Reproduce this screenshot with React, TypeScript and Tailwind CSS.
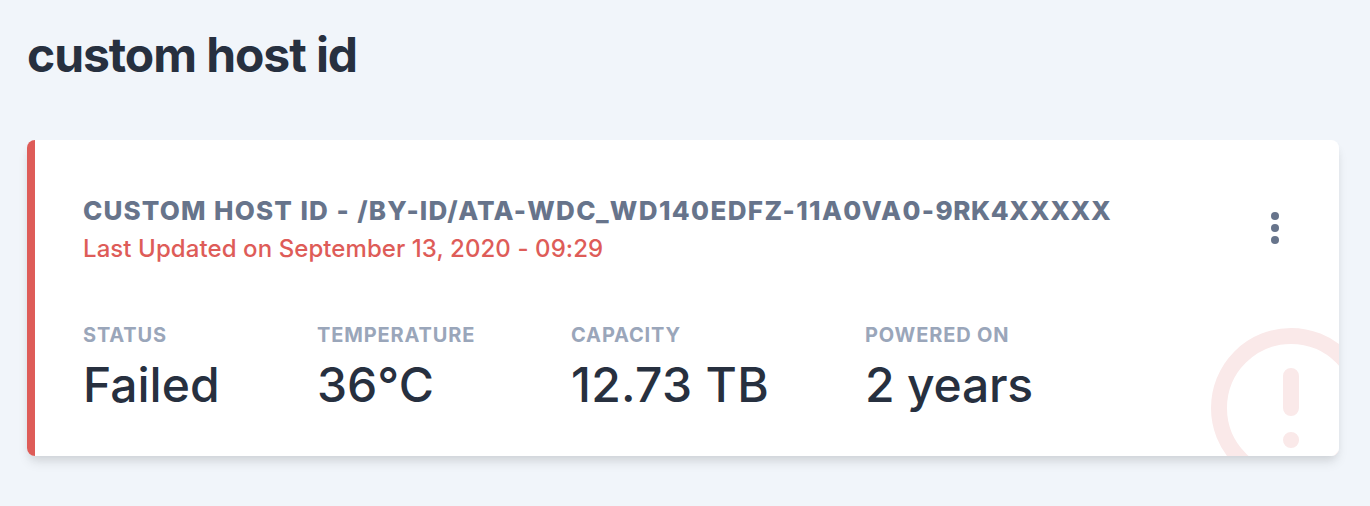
const stats = [
  { label: "STATUS", value: "Failed", width: "w-[234px]", tracking: "tracking-normal" },
  { label: "TEMPERATURE", value: "36°C", width: "w-[254px]", tracking: "tracking-normal" },
  { label: "CAPACITY", value: "12.73 TB", width: "w-[294px]", tracking: "tracking-[0.3px]" },
  { label: "POWERED ON", value: "2 years", width: "w-[240px]", tracking: "tracking-[-0.2px]" },
];

export default function App() {
  return (
    <main className="h-[506px] overflow-hidden bg-[#f1f5fa] px-[27px] pr-[31px] pt-[26px] font-['Inter',sans-serif] text-[#27303f]">
      <h1 className="text-[48px] leading-[58px] font-bold tracking-[-1.08px] whitespace-nowrap">custom host id</h1>
      <section className="mt-[56px] rounded-lg shadow-[0_8px_12px_-2px_rgba(0,0,0,0.1),0_4px_8px_-2px_rgba(0,0,0,0.06)]">
        <div className="relative h-[316px] overflow-hidden rounded-lg border-l-8 border-[#de5c58] bg-white pl-12">
          <svg className="absolute right-[-48px] bottom-[-48px] size-[192px] text-[#fae9e9]" viewBox="0 0 24 24" fill="none" stroke="currentColor" strokeWidth="2" strokeLinecap="round">
            <circle cx="12" cy="12" r="9" />
            <path d="M12 8v4M12 16h.01" />
          </svg>
          <div className="flex justify-between pt-[52px]">
            <div className="whitespace-nowrap">
              <h2 className="text-[26px] leading-[38px] font-extrabold tracking-[1.15px] [word-spacing:0.6px] text-[#67748b]">
                CUSTOM HOST ID - /BY-ID/ATA-<span className="tracking-[1.38px]">WDC_WD140EDFZ-11A0VA0-</span><span className="tracking-[0.6px]">9RK4XXXXX</span>
              </h2>
              <p className="text-[24px] leading-[38px] font-medium tracking-[0.08px] text-[#de5c58]">Last Updated on September 13, 2020 - 09:29</p>
            </div>
            <svg className="mt-[12px] mr-[40px] size-12 text-[#67748b]" viewBox="0 0 24 24" fill="currentColor">
              <circle cx="12" cy="6" r="2" /><circle cx="12" cy="12" r="2" /><circle cx="12" cy="18" r="2" />
            </svg>
          </div>
          <div className="mt-[52px] flex whitespace-nowrap">
            {stats.map((s) => (
              <div key={s.label} className={s.width}>
                <div className="text-[20px] leading-[30px] font-bold tracking-[0.85px] text-[#9aa6ba]">{s.label}</div>
                <div className={`mt-[3px] text-[48px] leading-[64px] font-medium ${s.tracking}`}>{s.value}</div>
              </div>
            ))}
          </div>
        </div>
      </section>
    </main>
  );
}
